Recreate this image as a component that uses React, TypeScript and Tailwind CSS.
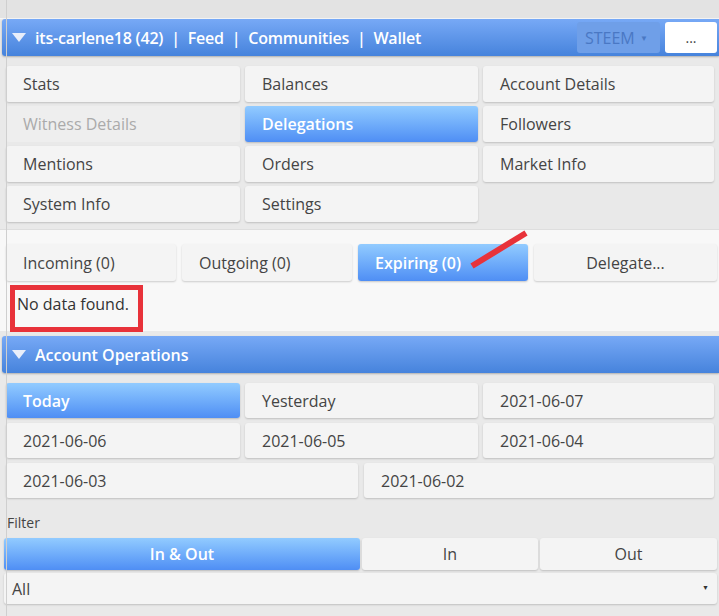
import React from 'react';

const menu = [
  { label: 'Stats' },
  { label: 'Balances' },
  { label: 'Account Details' },
  { label: 'Witness Details', disabled: true },
  { label: 'Delegations', active: true },
  { label: 'Followers' },
  { label: 'Mentions' },
  { label: 'Orders' },
  { label: 'Market Info' },
  { label: 'System Info' },
  { label: 'Settings' },
];

const btn = 'rounded-[3px] bg-[#f4f4f4] shadow-[0_1px_2px_rgba(0,0,0,0.18)] text-[#444]';
const blue = 'rounded-[3px] bg-gradient-to-b from-[#92cbff] to-[#4f8ef4] shadow-[0_1px_2px_rgba(0,0,0,0.2)] text-white font-semibold';

function Triangle() {
  return (
    <svg width="14" height="9" viewBox="0 0 14 9" className="shrink-0">
      <path d="M0 0 L14 0 L7 9 Z" fill="#e8eefa" />
    </svg>
  );
}

function Bar({ children }: { children: React.ReactNode }) {
  return (
    <div className="ml-[2px] h-[37px] flex items-center pl-[10px] rounded-l-[3px] bg-gradient-to-b from-[#77a9f6] to-[#4683dc] shadow-[0_1px_2px_rgba(0,0,0,0.25)] text-white text-[16px] font-semibold">
      {children}
    </div>
  );
}

export default function App() {
  return (
    <div className="relative w-[719px] h-[616px] overflow-hidden bg-[#e9e9e9] font-['Open_Sans',sans-serif]">
      <div className="absolute left-[6px] top-0 h-full w-px bg-[#cfcfcf]" />
      <div className="h-[19px] border-b border-[#f6f6f6] bg-[#e3e3e3]" />

      <Bar>
        <Triangle />
        <span className="ml-[9px] tracking-[-0.2px]">its-carlene18 (42)&nbsp;&nbsp;|&nbsp;&nbsp;Feed&nbsp;&nbsp;|&nbsp;&nbsp;Communities&nbsp;&nbsp;|&nbsp;&nbsp;Wallet</span>
        <div className="ml-auto flex items-center gap-[5px] pr-[2px]">
          <div className="w-[83px] h-[31px] rounded-[3px] bg-[#6f9fe8] flex items-center pl-[8px] text-[#4a78c4] font-normal text-[16px]">
            STEEM<span className="ml-auto mr-[12px] text-[8px]">▼</span>
          </div>
          <div className="w-[52px] h-[31px] rounded-[3px] bg-white flex items-center justify-center text-[#444] font-normal text-[14px]">...</div>
        </div>
      </Bar>

      <div className="grid grid-cols-[234px_233px_231px] gap-x-[5px] gap-y-[4px] pl-[6px] pt-[10px]">
        {menu.map((m) => (
          <div
            key={m.label}
            className={`h-[36px] flex items-center pl-[17px] text-[16px] ${
              m.active ? blue : m.disabled ? 'rounded-[3px] bg-[#eeeeee] text-[#aaaaaa]' : btn
            }`}
          >
            {m.label}
          </div>
        ))}
      </div>

      <div className="mt-[7px] bg-[#f8f8f8] border-t border-[#dedede] pt-[14px] pb-[4px] px-[6px] pr-[2px]">
        <div className="flex gap-[6px]">
          <div className={`w-[170px] h-[37px] flex items-center pl-[17px] text-[16px] ${btn}`}>Incoming (0)</div>
          <div className={`w-[170px] h-[37px] flex items-center pl-[17px] text-[16px] ${btn}`}>Outgoing (0)</div>
          <div className={`w-[170px] h-[37px] flex items-center pl-[17px] text-[16px] ${blue}`}>Expiring (0)</div>
          <div className={`flex-1 h-[37px] flex items-center justify-center text-[16px] ${btn}`}>Delegate...</div>
        </div>
        <div className="h-[46px] flex items-center pl-[11px] text-[16px] text-[#333]">No data found.</div>
      </div>

      <div className="mt-[5px]">
        <Bar>
          <Triangle />
          <span className="ml-[9px]">Account Operations</span>
        </Bar>
      </div>

      <div className="pl-[6px] pt-[10px]">
        <div className="grid grid-cols-[234px_233px_231px] gap-x-[5px] gap-y-[5px]">
          <div className={`h-[35px] flex items-center pl-[17px] text-[16px] ${blue}`}>Today</div>
          <div className={`h-[35px] flex items-center pl-[17px] text-[16px] ${btn}`}>Yesterday</div>
          <div className={`h-[35px] flex items-center pl-[17px] text-[16px] ${btn}`}>2021-06-07</div>
          <div className={`h-[35px] flex items-center pl-[17px] text-[16px] ${btn}`}>2021-06-06</div>
          <div className={`h-[35px] flex items-center pl-[17px] text-[16px] ${btn}`}>2021-06-05</div>
          <div className={`h-[35px] flex items-center pl-[17px] text-[16px] ${btn}`}>2021-06-04</div>
        </div>
        <div className="grid grid-cols-[352px_350px] gap-x-[6px] mt-[5px]">
          <div className={`h-[35px] flex items-center pl-[17px] text-[16px] ${btn}`}>2021-06-03</div>
          <div className={`h-[35px] flex items-center pl-[17px] text-[16px] ${btn}`}>2021-06-02</div>
        </div>
      </div>

      <div className="pl-[7px] mt-[14px] h-[20px] text-[14px] text-[#444]">Filter</div>

      <div className="px-[4px] pr-[2px] mt-[6px]">
        <div className="flex gap-[2px] h-[32px] text-[16px]">
          <div className={`w-[356px] flex items-center justify-center ${blue}`}>In &amp; Out</div>
          <div className={`w-[176px] flex items-center justify-center ${btn}`}>In</div>
          <div className={`flex-1 flex items-center justify-center ${btn}`}>Out</div>
        </div>
        <div className={`mt-[3px] h-[31px] flex items-center pl-[8px] pr-[8px] text-[16px] text-[#333] ${btn}`}>
          All<span className="ml-auto text-[7px] text-[#333]">▼</span>
        </div>
      </div>

      {/* annotations */}
      <div className="absolute left-[10px] top-[285px] w-[133px] h-[47px] border-[5px] border-[#e8323a]" />
      <svg className="absolute left-0 top-0 pointer-events-none" width="719" height="616">
        <line x1="472" y1="266" x2="526" y2="233" stroke="#e8323a" strokeWidth="6" />
      </svg>
    </div>
  );
}
